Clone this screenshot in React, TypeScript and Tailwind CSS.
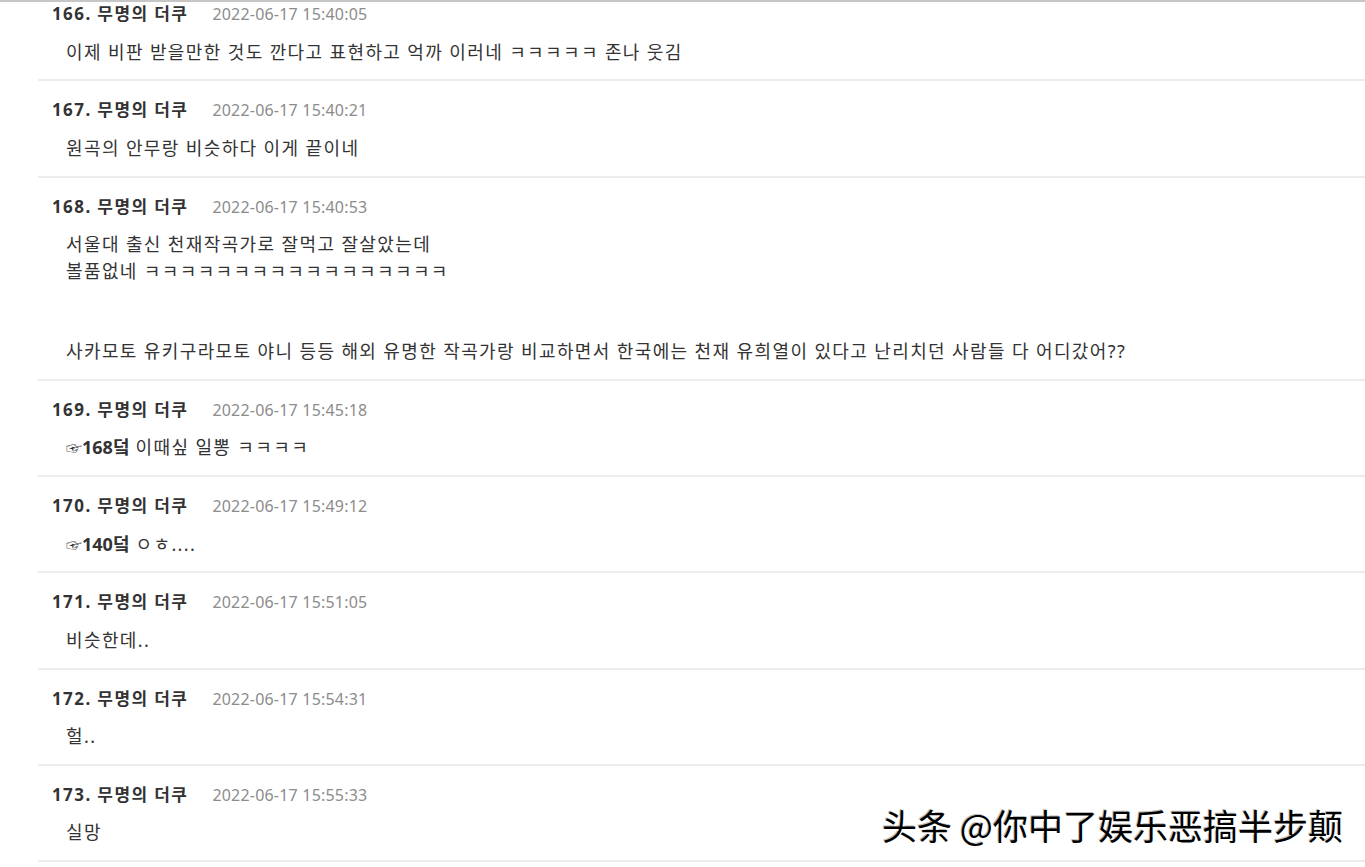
import React from 'react';

type Comment = {
    no: number;
    time: string;
    body: React.ReactNode;
};

const Pointer: React.FC = () => <span className="text-[16px] leading-none tracking-normal">☞</span>;

const comments: Comment[] = [
    { no: 166, time: '2022-06-17 15:40:05', body: '이제 비판 받을만한 것도 깐다고 표현하고 억까 이러네 ㅋㅋㅋㅋㅋ 존나 웃김' },
    { no: 167, time: '2022-06-17 15:40:21', body: '원곡의 안무랑 비슷하다 이게 끝이네' },
    {
        no: 168,
        time: '2022-06-17 15:40:53',
        body: (
            <>
                <p>서울대 출신 천재작곡가로 잘먹고 잘살았는데</p>
                <p>볼품없네 ㅋㅋㅋㅋㅋㅋㅋㅋㅋㅋㅋㅋㅋㅋㅋㅋㅋ</p>
                <p>&nbsp;</p>
                <p>&nbsp;</p>
                <p>사카모토 유키구라모토 야니 등등 해외 유명한 작곡가랑 비교하면서 한국에는 천재 유희열이 있다고 난리치던 사람들 다 어디갔어??</p>
            </>
        ),
    },
    {
        no: 169,
        time: '2022-06-17 15:45:18',
        body: (
            <>
                <Pointer />
                <b className="tracking-normal">168덬</b> 이때싶 일뽕 ㅋㅋㅋㅋ
            </>
        ),
    },
    {
        no: 170,
        time: '2022-06-17 15:49:12',
        body: (
            <>
                <Pointer />
                <b className="tracking-normal">140덬</b> ㅇㅎ....
            </>
        ),
    },
    { no: 171, time: '2022-06-17 15:51:05', body: '비슷한데..' },
    { no: 172, time: '2022-06-17 15:54:31', body: '헐..' },
    { no: 173, time: '2022-06-17 15:55:33', body: '실망' },
];

const CommentRow: React.FC<{ c: Comment }> = ({ c }) => (
    <li className="ml-[38px] border-b-2 border-[#ececec] pt-[17px] pb-[14px]">
        <div className="flex items-center h-6 pl-[14px]">
            <span className="text-[17px] leading-6 font-bold tracking-[1.4px] text-[#333]">{c.no}. 무명의 더쿠</span>
            <span className="ml-6 text-[16px] leading-6 tracking-[0.2px] text-[#8c8c8c]">{c.time}</span>
        </div>
        <div className="mt-[12.5px] pl-[28px] text-[18px] leading-[26.75px] tracking-[1.38px] text-[#333]">{c.body}</div>
    </li>
);

export default function App() {
    return (
        <div
            className="relative h-[867px] overflow-hidden bg-white"
            style={{ fontFamily: '"Noto Sans", "Noto Sans CJK KR", sans-serif' }}
        >
            <div className="h-[3px] border-t-2 border-[#c6c6c6]" />
            <ul className="-mt-[18px]">
                {comments.map(c => (
                    <CommentRow key={c.no} c={c} />
                ))}
            </ul>
            <div
                className="absolute left-[882px] top-[803px] text-[35px] leading-[44px] text-black"
                style={{ fontFamily: '"Noto Sans CJK SC", sans-serif', textShadow: '2px 2px 0 #fff, -1px -1px 0 #bbb' }}
            >
                头条 @你中了娱乐恶搞半步颠
            </div>
        </div>
    );
}
